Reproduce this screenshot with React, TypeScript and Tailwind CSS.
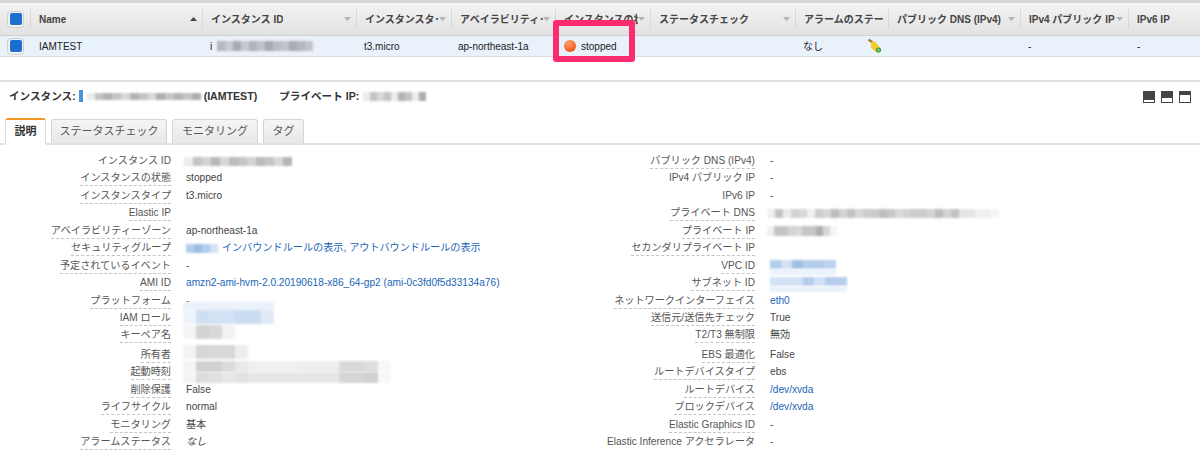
const columns = [
  { label: "Name", width: "w-[172px]", arrow: "up" },
  { label: "インスタンス ID", width: "w-[154px]", arrow: "down" },
  { label: "インスタンスタ･", width: "w-[95px]", arrow: "down" },
  { label: "アベイラビリティ･", width: "w-[104px]", arrow: "down" },
  { label: "インスタンスの状", width: "w-[95px]", arrow: "down" },
  { label: "ステータスチェック", width: "w-[145px]", arrow: "down" },
  { label: "アラームのステー", width: "w-[93px]", arrow: "" },
  { label: "パブリック DNS (IPv4)", width: "w-[132px]", arrow: "down" },
  { label: "IPv4 パブリック IP", width: "w-[108px]", arrow: "down" },
  { label: "IPv6 IP", width: "w-[72px]", arrow: "" },
];

const GRAY_A = "#c4c4c4";
const GRAY_B = "#d8d8d8";
const GRAY_C = "#ececec";
const BLUE_A = "#b4cdeb";
const BLUE_B = "#d2e1f4";
const BLUE_C = "#ebf2fb";

// pixelated redaction smudge, one row of mosaic cells
function Smudge({ cells, size = 7, height = 8 }: { cells: string[]; size?: number; height?: number }) {
  return (
    <span className="flex shrink-0 blur-[0.8px]">
      {cells.map((color, i) => (
        <span key={i} style={{ width: size, height, backgroundColor: color }} />
      ))}
    </span>
  );
}

function Checkbox() {
  return (
    <span className="flex h-[17px] w-[17px] items-center justify-center rounded-[4px] border border-[#cfcfcf] bg-[#f2f2f2]">
      <span className="h-[12px] w-[12px] rounded-[2px] bg-[#1c6fd0]" />
    </span>
  );
}

function SortArrow({ dir }: { dir: string }) {
  if (dir === "up") {
    return (
      <svg width="7" height="4" viewBox="0 0 7 4" className="shrink-0">
        <path d="M3.5 0 7 4H0z" fill="#444" />
      </svg>
    );
  }
  return (
    <svg width="7" height="4" viewBox="0 0 7 4" className="shrink-0">
      <path d="M0 0h7L3.5 4z" fill="#b5b5b5" />
    </svg>
  );
}

function Broom() {
  return (
    <svg width="14" height="14" viewBox="0 0 14 14" className="ml-[45px] shrink-0">
      <path d="M0.5 0.5 L4.5 3.5" stroke="#a9741c" strokeWidth="2.2" />
      <path d="M3 3 L7 2.5 L12 8.5 L8.5 13 L3 9 Z" fill="#f2cc2a" />
      <circle cx="10.5" cy="11" r="2.6" fill="#3f9a35" />
      <path d="M10.5 9.4v3.2M8.9 11h3.2" stroke="#a6dc98" strokeWidth="0.7" />
    </svg>
  );
}

function Header() {
  return (
    <div className="flex h-[33px] items-center border-b border-[#cfcfcf] bg-gradient-to-b from-[#f3f3f3] to-[#e2e2e2] font-bold text-[#444]">
      <div className="flex w-[30px] justify-center pl-[1px]">
        <Checkbox />
      </div>
      {columns.map((col) => (
        <div key={col.label} className={`${col.width} flex h-[20px] items-center justify-between border-l border-[#d8d8d8] pl-[8px] pr-[5px]`}>
          <span className="overflow-hidden whitespace-nowrap">{col.label}</span>
          {col.arrow && <SortArrow dir={col.arrow} />}
        </div>
      ))}
    </div>
  );
}

function InstanceRow() {
  return (
    <div className="flex h-[21px] items-center border-b border-[#dcdcdc] bg-[#e9f1fb] text-[#222]">
      <div className="flex w-[30px] justify-center pl-[1px]">
        <Checkbox />
      </div>
      <div className="w-[172px] pl-[9px]">IAMTEST</div>
      <div className="flex w-[154px] items-center pl-[8px]">
        <span>i</span>
        <span className="ml-[1px] bg-[#eef0f5] px-[4px] py-[3px]">
          <Smudge size={8} height={10} cells={["#b4b7c0", "#c8cad0", "#a8abb5", "#c6c8ce", "#b0b3bc", "#c0c2c9", "#a6a9b3", "#b9bcc4", "#c2c4ca", "#a8abb4", "#b4b7c0", "#c2c4ca"]} />
        </span>
      </div>
      <div className="w-[95px] pl-[8px]">t3.micro</div>
      <div className="w-[104px] pl-[7px]">ap-northeast-1a</div>
      <div className="flex w-[95px] items-center gap-[5px] pl-[9px]">
        <span className="h-[12px] w-[12px] rounded-full bg-[radial-gradient(circle_at_40%_30%,#ffa36b,#f2581c_70%)]" />
        <span>stopped</span>
      </div>
      <div className="w-[145px]" />
      <div className="flex w-[93px] items-center pl-[8px]">
        <span className="whitespace-nowrap">なし</span>
        <Broom />
      </div>
      <div className="w-[132px]" />
      <div className="w-[108px] pl-[8px]">-</div>
      <div className="w-[72px] pl-[9px]">-</div>
    </div>
  );
}

function LayoutIcons() {
  return (
    <div className="flex items-center gap-[6px]">
      <span className="flex h-[12px] w-[12px] items-end bg-[#444] p-[1px]">
        <span className="h-[2px] w-full bg-white" />
      </span>
      <span className="flex h-[12px] w-[12px] items-end bg-[#444] p-[1px]">
        <span className="h-[4px] w-full bg-white" />
      </span>
      <span className="flex h-[12px] w-[12px] items-end bg-[#444] p-[1px]">
        <span className="h-[7px] w-full bg-white" />
      </span>
    </div>
  );
}

function PanelBar() {
  return (
    <div className="flex h-[29px] items-center justify-between pl-[9px] pr-[9px] text-[10.6px] font-bold text-[#333]">
      <div className="flex items-center">
        <span>インスタンス:</span>
        <span className="ml-[3px] h-[12px] w-[4px] bg-[#4b93d8]" />
        <span className="ml-[3px]">
          <Smudge size={8.85} height={7} cells={[GRAY_C, GRAY_A, "#b0b0b0", GRAY_A, GRAY_B, "#b4b4b4", GRAY_A, GRAY_B, "#adadad", GRAY_A, "#b4b4b4", GRAY_A, "#adadad"]} />
        </span>
        <span className="ml-[3px]">(IAMTEST)</span>
        <span className="ml-[22px]">プライベート IP:</span>
        <span className="ml-[4px]">
          <Smudge size={7} height={9} cells={[GRAY_C, GRAY_A, GRAY_B, GRAY_A, GRAY_C, "#b4b4b4", GRAY_A, GRAY_C, "#adadad"]} />
        </span>
      </div>
      <LayoutIcons />
    </div>
  );
}

function Tabs() {
  const tabClass = "flex h-[24px] items-center justify-center rounded-t-[3px] border border-b-0 border-[#d5d5d5] bg-gradient-to-b from-[#f5f5f5] to-[#e8e8e8] text-[#555]";
  return (
    <div className="flex h-[34px] items-end gap-[5px] border-b-2 border-[#e2e2e2] pl-[5px] text-[11px]">
      <div className="-mb-[2px] flex h-[27px] w-[41px] items-center justify-center rounded-t-[3px] border-x border-b-2 border-t-2 border-[#dcdcdc] border-t-[#f29a1f] border-b-white bg-white font-bold text-[#333]">
        説明
      </div>
      <div className={`${tabClass} w-[116px]`}>ステータスチェック</div>
      <div className={`${tabClass} w-[86px]`}>モニタリング</div>
      <div className={`${tabClass} w-[41px]`}>タグ</div>
    </div>
  );
}

function Row({ label, plain, tall, children }: { label: string; plain?: boolean; tall?: boolean; children?: React.ReactNode }) {
  return (
    <div className={`grid grid-cols-[171px_1fr] ${tall ? "h-[19.45px]" : "h-[17.45px]"}`}>
      <div className="flex justify-end">
        <span className={`h-[15px] whitespace-nowrap leading-[14px] text-[#555] ${plain ? "" : "border-b border-dashed border-[#c4c4c4]"}`}>{label}</span>
      </div>
      <div className="relative flex items-start pl-[15px] leading-[14px] text-[#444]">{children}</div>
    </div>
  );
}

function Link({ children }: { children: React.ReactNode }) {
  return <span className="whitespace-nowrap text-[#1a66b8]">{children}</span>;
}

function LeftColumn() {
  return (
    <div className="w-[584px]">
      <Row label="インスタンス ID" plain>
        <span className="-ml-[2px] mt-[3px]">
          <Smudge size={9} height={9} cells={[GRAY_C, GRAY_A, "#d3d3d3", "#b8b8b8", GRAY_B, "#bdbdbd", GRAY_A, "#d3d3d3", "#bbbbbb", GRAY_A, GRAY_B, "#b5b5b5"]} />
        </span>
      </Row>
      <Row label="インスタンスの状態">stopped</Row>
      <Row label="インスタンスタイプ">t3.micro</Row>
      <Row label="Elastic IP" />
      <Row label="アベイラビリティーゾーン">ap-northeast-1a</Row>
      <Row label="セキュリティグループ">
        <span className="mr-[4px] mt-[3px]">
          <Smudge size={8} height={9} cells={[BLUE_A, "#9dbde4", BLUE_A, BLUE_B]} />
        </span>
        <Link>インバウンドルールの表示, アウトバウンドルールの表示</Link>
      </Row>
      <Row label="予定されているイベント">-</Row>
      <Row label="AMI ID">
        <Link>amzn2-ami-hvm-2.0.20190618-x86_64-gp2 (ami-0c3fd0f5d33134a76)</Link>
      </Row>
      <Row label="プラットフォーム">
        -
        <span className="absolute left-[12px] top-[8px] -z-0">
          <Smudge size={13} height={9} cells={[BLUE_C, BLUE_C, BLUE_C, BLUE_C, BLUE_C, BLUE_C, BLUE_C]} />
        </span>
      </Row>
      <Row label="IAM ロール">
        <span className="-ml-[3px] mt-[-1px]">
          <Smudge size={13} height={14} cells={["#eef3fb", "#cfdff2", "#d2e1f3", "#d2e1f3", "#cadcf1", "#cadcf1", "#e0eaf7"]} />
        </span>
      </Row>
      <Row label="キーペア名" tall>
        <span className="-ml-[3px] mt-[-3px]">
          <Smudge size={13} height={14} cells={["#f4f4f4", "#d2d2d2", GRAY_B, "#f2f2f2"]} />
        </span>
      </Row>
      <Row label="所有者">
        <span className="-ml-[3px] mt-[-3px]">
          <Smudge size={13} height={14} cells={["#f4f4f4", "#d6d6d6", GRAY_B, "#d8d8d8", "#eeeeee"]} />
        </span>
      </Row>
      <Row label="起動時刻">
        <span className="-ml-[3px] mt-[-4px] flex flex-col">
          <Smudge size={13} height={11} cells={["#f4f4f4", "#d0d0d0", "#d0d0d0", "#dcdcdc", "#e8e8e8", "#f0f0f0", "#f0f0f0", "#f0f0f0", "#f0f0f0", "#eeeeee", "#eeeeee", "#eeeeee", "#d9d9d9", "#d9d9d9", "#dedede", "#f8f8f8"]} />
          <Smudge size={13} height={11} cells={["#f4f4f4", "#dcdcdc", "#e0e0e0", "#e8e8e8", "#e2e2e2", "#e6e6e6", "#e6e6e6", "#e6e6e6", "#e6e6e6", "#e6e6e6", "#e6e6e6", "#e6e6e6", "#d6d6d6", "#d6d6d6", "#d0d0d0", "#f8f8f8"]} />
        </span>
      </Row>
      <Row label="削除保護">False</Row>
      <Row label="ライフサイクル">normal</Row>
      <Row label="モニタリング">基本</Row>
      <Row label="アラームステータス">
        <span className="italic">なし</span>
      </Row>
    </div>
  );
}

function RightColumn() {
  return (
    <div className="flex-1">
      <Row label="パブリック DNS (IPv4)">-</Row>
      <Row label="IPv4 パブリック IP" plain>-</Row>
      <Row label="IPv6 IP" plain>-</Row>
      <Row label="プライベート DNS">
        <span className="-ml-[3px] mt-[3px]">
          <Smudge size={8} height={9} cells={["#f0f0f0", GRAY_A, "#ececec", "#d3d3d3", GRAY_B, "#f0f0f0", "#cccccc", GRAY_B, "#bdbdbd", "#d3d3d3", "#c2c2c2", GRAY_B, "#cccccc", "#cccccc", "#bdbdbd", "#c8c8c8", GRAY_B, "#d3d3d3", "#cccccc", "#cccccc", "#d3d3d3", "#bdbdbd", "#d3d3d3", "#c2c2c2", "#e6e6e6", "#e6e6e6", "#f0f0f0", "#f0f0f0", "#f6f6f6"]} />
        </span>
      </Row>
      <Row label="プライベート IP">
        <span className="-ml-[3px] mt-[2px]">
          <Smudge size={7} height={10} cells={["#f0f0f0", GRAY_A, GRAY_A, "#d3d3d3", GRAY_B, "#c6c6c6", "#c6c6c6", "#aeaeae", GRAY_B, "#f5f5f5"]} />
        </span>
      </Row>
      <Row label="セカンダリプライベート IP" />
      <Row label="VPC ID">
        <span className="mt-[1px] flex flex-col">
          <Smudge size={11} height={9} cells={[BLUE_A, BLUE_B, "#a0bfe6", BLUE_A, BLUE_A, "#bdd2ee"]} />
          <Smudge size={11} height={6} cells={[BLUE_C, BLUE_C, BLUE_C, BLUE_C, BLUE_C, BLUE_C]} />
        </span>
      </Row>
      <Row label="サブネット ID">
        <span className="mt-[1px] flex flex-col">
          <Smudge size={11} height={9} cells={[BLUE_B, BLUE_B, BLUE_B, BLUE_A, BLUE_B, BLUE_A, "#b6cdec"]} />
          <Smudge size={11} height={6} cells={[BLUE_C, BLUE_C, BLUE_C, BLUE_C, BLUE_C, BLUE_C, BLUE_C]} />
        </span>
      </Row>
      <Row label="ネットワークインターフェイス">
        <Link>eth0</Link>
      </Row>
      <Row label="送信元/送信先チェック">True</Row>
      <Row label="T2/T3 無制限" tall>無効</Row>
      <Row label="EBS 最適化">False</Row>
      <Row label="ルートデバイスタイプ">ebs</Row>
      <Row label="ルートデバイス">
        <Link>/dev/xvda</Link>
      </Row>
      <Row label="ブロックデバイス">
        <Link>/dev/xvda</Link>
      </Row>
      <Row label="Elastic Graphics ID">-</Row>
      <Row label="Elastic Inference アクセラレータ" plain>-</Row>
    </div>
  );
}

export default function App() {
  return (
    <div className="relative h-[452px] w-[1200px] overflow-hidden bg-white font-['Liberation_Sans','Noto_Sans_CJK_JP',sans-serif] text-[10px]">
      <div className="h-[3px] bg-[#d6d6d6]" />
      <Header />
      <InstanceRow />
      <div className="h-[23px]" />
      <div className="h-[2px] bg-[#e2e2e2]" />
      <PanelBar />
      <Tabs />
      <div className="flex pt-[9px] text-[10.15px]">
        <LeftColumn />
        <RightColumn />
      </div>

      {/* RED CALLOUT */}
      <div className="absolute left-[553px] top-[20px] h-[42px] w-[82px] rounded-[3px] border-[6px] border-[#fb2c6e]" />
    </div>
  );
}
